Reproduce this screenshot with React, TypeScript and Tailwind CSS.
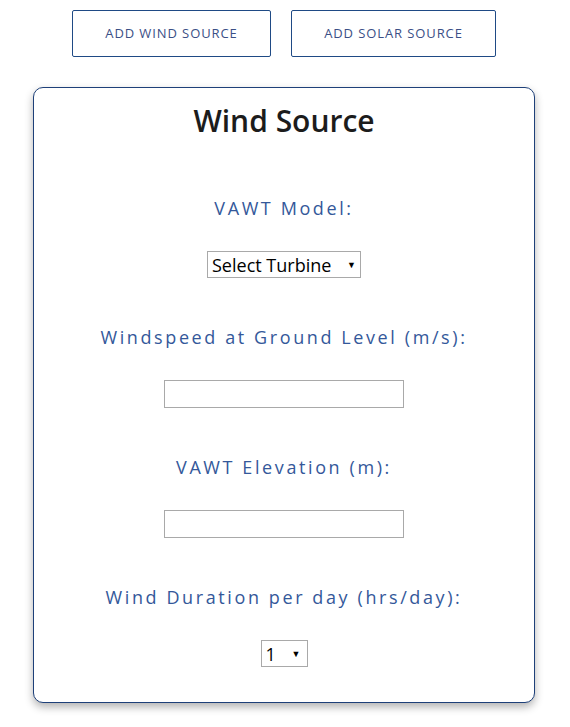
import { useState } from 'react';

const Field = ({ label, children }: { label: string; children: React.ReactNode }) => (
  <div className="flex flex-col items-center">
    <label className="text-[18px] leading-[24px] tracking-[2.6px] text-[#34589a]">{label}</label>
    <div className="mt-[31px]">{children}</div>
  </div>
);

const App = () => {
  const [turbine, setTurbine] = useState('');
  const [hours, setHours] = useState('1');

  return (
    <div className="min-h-screen bg-white pt-[10px] font-['Open_Sans',sans-serif]">
      <div className="flex justify-center gap-[20px] pr-[2px]">
        <button className="h-[47px] w-[199px] rounded-[2px] border border-[#1f4a85] text-[13px] tracking-[0.9px] text-[#3b4f86]">
          ADD WIND SOURCE
        </button>
        <button className="h-[47px] w-[205px] rounded-[2px] border border-[#1f4a85] text-[13px] tracking-[0.9px] text-[#3b4f86]">
          ADD SOLAR SOURCE
        </button>
      </div>

      <div className="ml-[33px] mt-[30px] w-[502px] rounded-[10px] border border-[#1e4079] bg-white pt-[16px] pb-[35px] shadow-[0_4px_8px_rgba(0,0,0,0.3)]">
        <h2 className="text-center text-[30px] leading-[34px] font-semibold text-[#1c1c1c]">Wind Source</h2>

        <div className="mt-[58px] flex flex-col gap-[47px]">
          <Field label="VAWT Model:">
            <div className="relative">
              <select
                value={turbine}
                onChange={(e) => setTurbine(e.target.value)}
                className="h-[27px] w-[154px] appearance-none border border-[#a9a9a9] bg-white pl-[4px] text-[18px] leading-[24px] text-black"
              >
                <option value="">Select Turbine</option>
              </select>
              <span className="pointer-events-none absolute right-[5px] top-[7px] text-[9px] text-black">▼</span>
            </div>
          </Field>

          <Field label="Windspeed at Ground Level (m/s):">
            <input className="block h-[28px] w-[240px] border border-[#a9a9a9]" />
          </Field>

          <Field label="VAWT Elevation (m):">
            <input className="block h-[28px] w-[240px] border border-[#a9a9a9]" />
          </Field>

          <Field label="Wind Duration per day (hrs/day):">
            <div className="relative">
              <select
                value={hours}
                onChange={(e) => setHours(e.target.value)}
                className="h-[27px] w-[47px] appearance-none border border-[#a9a9a9] bg-white pl-[4px] text-[18px] leading-[24px] text-black"
              >
                {Array.from({ length: 24 }, (_, i) => (
                  <option key={i} value={String(i + 1)}>{i + 1}</option>
                ))}
              </select>
              <span className="pointer-events-none absolute right-[7px] top-[7px] text-[9px] text-black">▼</span>
            </div>
          </Field>
        </div>
      </div>
    </div>
  );
};

export default App;
